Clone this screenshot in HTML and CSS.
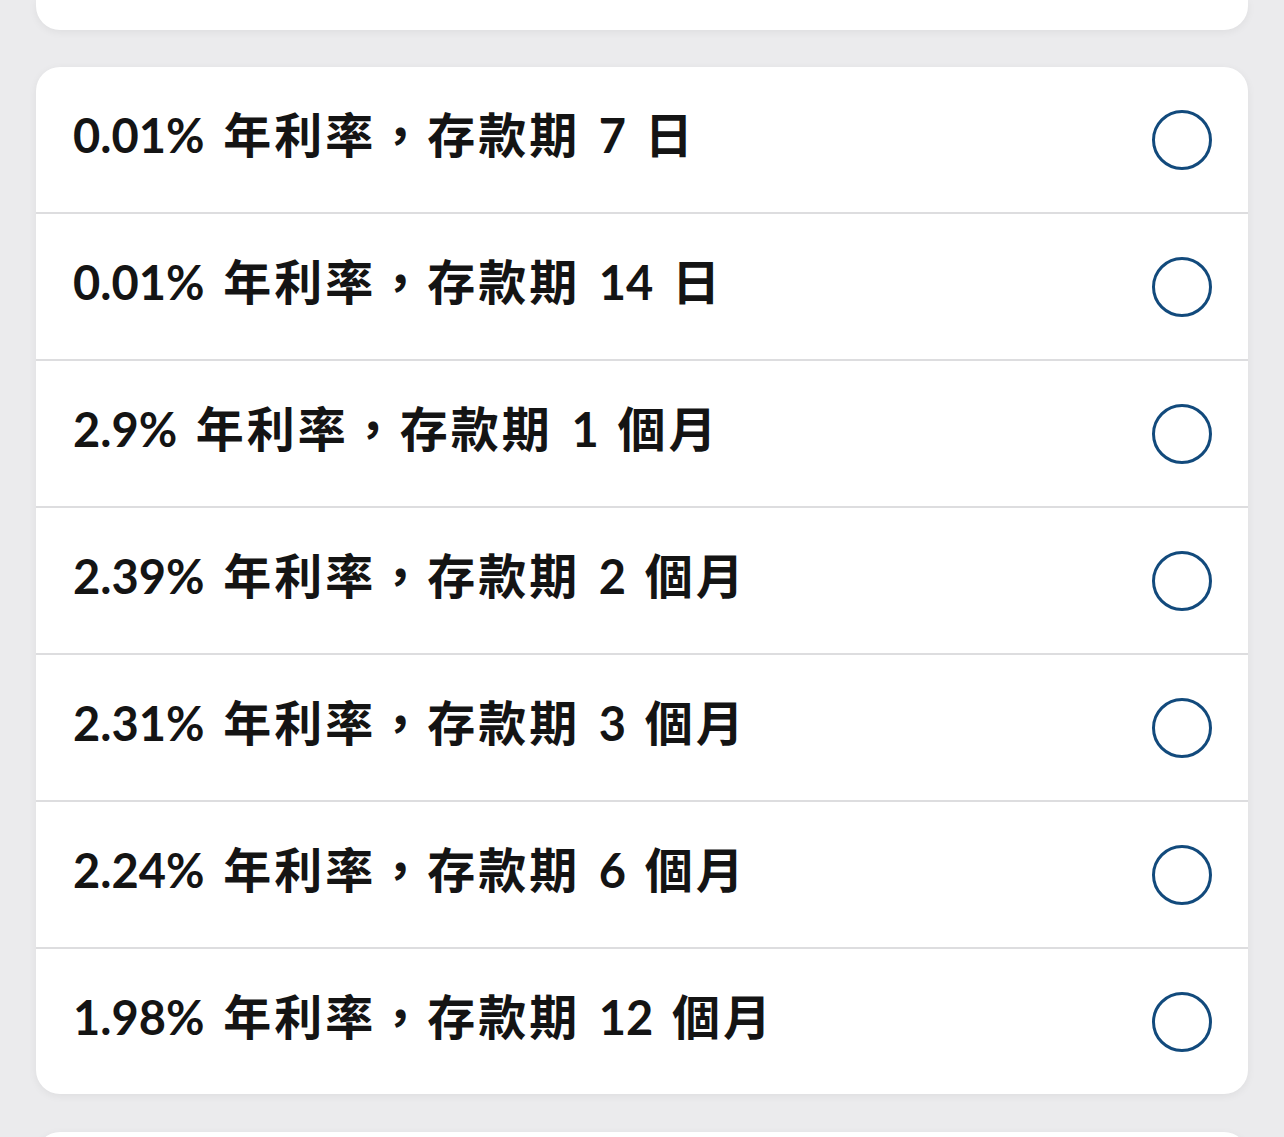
FILE: index.html
```html
<!DOCTYPE html>
<html lang="zh-Hant">
<head>
    <meta charset="UTF-8">
    <meta name="viewport" content="width=device-width, initial-scale=1.0">
    <title>存款期</title>
    <link rel="stylesheet" href="styles.css">
</head>
<body>
    <div class="page">
        <div class="card card-top"></div>

        <div class="card options">
            <label class="option">
                <span class="option-text"><span class="num">0.01%</span> 年利率，存款期 <span class="num">7</span> 日</span>
                <span class="radio"></span>
            </label>
            <label class="option">
                <span class="option-text"><span class="num">0.01%</span> 年利率，存款期 <span class="num">14</span> 日</span>
                <span class="radio"></span>
            </label>
            <label class="option">
                <span class="option-text"><span class="num">2.9%</span> 年利率，存款期 <span class="num">1</span> 個月</span>
                <span class="radio"></span>
            </label>
            <label class="option">
                <span class="option-text"><span class="num">2.39%</span> 年利率，存款期 <span class="num">2</span> 個月</span>
                <span class="radio"></span>
            </label>
            <label class="option">
                <span class="option-text"><span class="num">2.31%</span> 年利率，存款期 <span class="num">3</span> 個月</span>
                <span class="radio"></span>
            </label>
            <label class="option">
                <span class="option-text"><span class="num">2.24%</span> 年利率，存款期 <span class="num">6</span> 個月</span>
                <span class="radio"></span>
            </label>
            <label class="option">
                <span class="option-text"><span class="num">1.98%</span> 年利率，存款期 <span class="num">12</span> 個月</span>
                <span class="radio"></span>
            </label>
        </div>

        <div class="card card-bottom"></div>
    </div>
</body>
</html>
```

FILE: styles.css
```css
body {
    margin: 0;
    background-color: #ebebed;
    font-family: "Lato", "Noto Sans CJK TC", sans-serif;
    overflow: hidden;
}
.page {
    padding: 0 36px;
}
.card {
    background-color: #fff;
    border-radius: 24px;
    box-shadow: 0 2px 8px rgba(0,0,0,0.06);
}
.card-top {
    height: 30px;
    border-radius: 0 0 24px 24px;
    margin-bottom: 37px;
}
.options {
    overflow: hidden;
}
.option {
    display: flex;
    align-items: center;
    justify-content: space-between;
    height: 145px;
    padding: 0 36px 0 37px;
    border-bottom: 2px solid #dddddf;
}
.option:last-child {
    border-bottom: none;
}
.option-text {
    font-size: 48px;
    line-height: 1;
    font-weight: 700;
    color: #141414;
    letter-spacing: 3px;
    word-spacing: 4px;
    margin-top: -9px;
}
.num {
    font-size: 47px;
    letter-spacing: 0;
}
.radio {
    width: 54px;
    height: 54px;
    border: 3px solid #124a7c;
    border-radius: 50%;
}
.card-bottom {
    margin-top: 38px;
    height: 60px;
    border-radius: 24px 24px 0 0;
}
```
